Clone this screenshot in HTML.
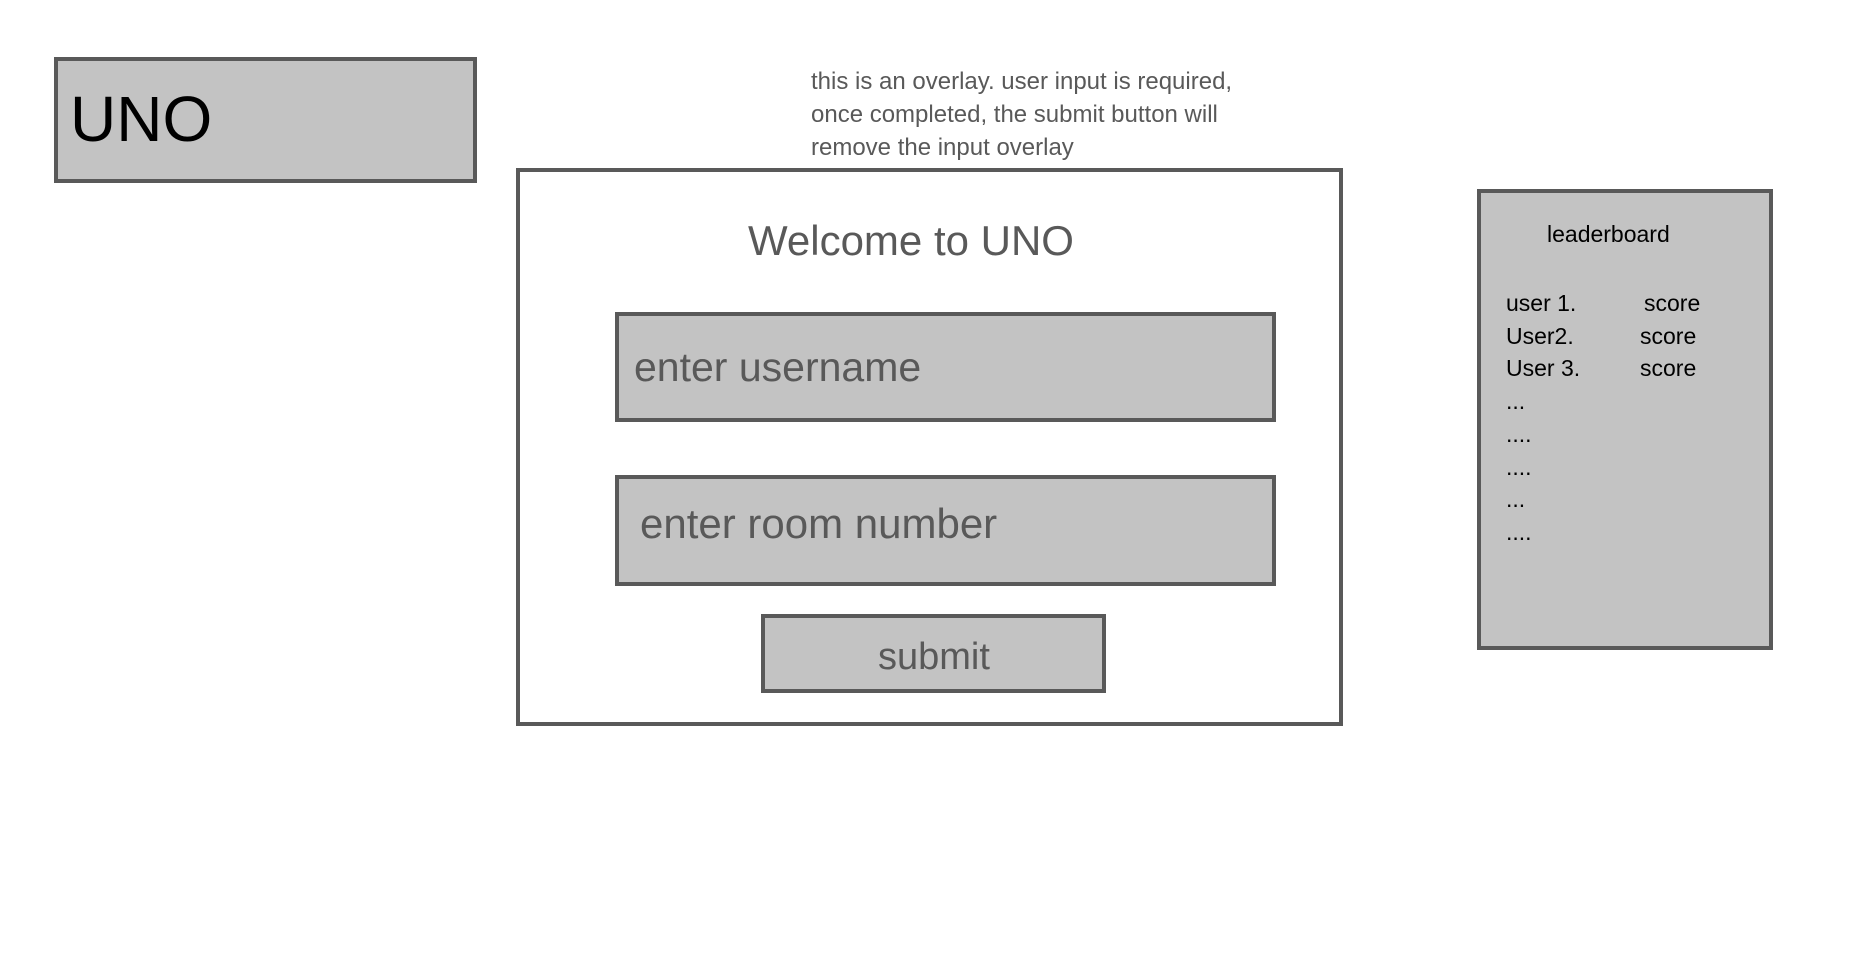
<!DOCTYPE html>
<html><head><style>
body{margin:0;width:1858px;height:963px;background:#fff;position:relative;font-family:"Liberation Sans",sans-serif;overflow:hidden}
.b{position:absolute;box-sizing:border-box;border:4px solid #595959;background:#c3c3c3}
.t{position:absolute;white-space:nowrap}
</style></head><body>
<div class="b" style="left:54px;top:57px;width:423px;height:126px"></div>
<div class="t" style="left:70px;top:82px;font-size:64px;color:#000">UNO</div>

<div class="t" style="left:811px;top:65px;font-size:24px;line-height:33px;color:#595959">this is an overlay. user input is required,<br>once completed, the submit button will<br>remove the input overlay</div>

<div class="b" style="left:516px;top:168px;width:827px;height:558px;background:#fff"></div>
<div class="t" style="left:748px;top:217px;font-size:42px;color:#595959">Welcome to UNO</div>

<div class="b" style="left:615px;top:312px;width:661px;height:110px"></div>
<div class="t" style="left:634px;top:344px;font-size:41px;color:#595959">enter username</div>
<div class="b" style="left:615px;top:475px;width:661px;height:111px"></div>
<div class="t" style="left:640px;top:500px;font-size:42px;color:#595959">enter room number</div>
<div class="b" style="left:761px;top:614px;width:345px;height:79px"></div>
<div class="t" style="left:878px;top:636px;font-size:38px;color:#595959">submit</div>

<div class="b" style="left:1477px;top:189px;width:296px;height:461px"></div>
<div class="t" style="left:1547px;top:221px;font-size:23px;color:#000">leaderboard</div>
<div class="t" style="left:1506px;top:287px;font-size:23px;line-height:32.7px;color:#000">user 1.<br>User2.<br>User 3.<br>...<br>....<br>....<br>...<br>....</div>
<div class="t" style="left:1644px;top:287px;font-size:23px;line-height:32.7px;color:#000">score</div>
<div class="t" style="left:1640px;top:319.7px;font-size:23px;line-height:32.7px;color:#000">score<br>score</div>
</body></html>
